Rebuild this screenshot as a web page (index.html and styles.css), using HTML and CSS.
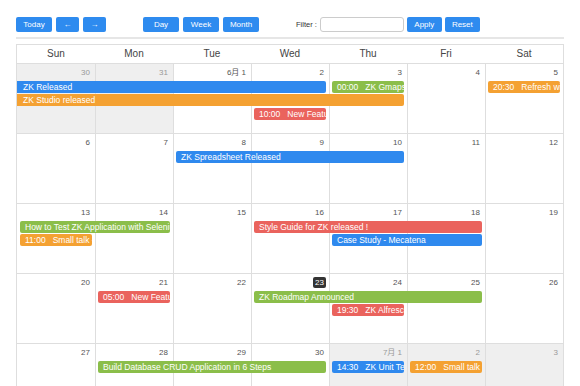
FILE: index.html
```html
<!DOCTYPE html>
<html lang="en">

<head>
    <meta charset="UTF-8">
    <title>Calendar</title>
    <link rel="stylesheet" href="styles.css">
</head>

<body>

    <div class="toolbar">
        <div class="group">
            <div class="btn">Today</div>
            <div class="btn arrow">&larr;</div>
            <div class="btn arrow">&rarr;</div>
        </div>
        <div class="group views">
            <div class="btn">Day</div>
            <div class="btn">Week</div>
            <div class="btn">Month</div>
        </div>
        <div class="group filter">
            <label>Filter :</label>
            <input type="text">
            <div class="btn small">Apply</div>
            <div class="btn small">Reset</div>
        </div>
    </div>

    <div class="cal">
        <div class="head">
            <div>Sun</div>
            <div>Mon</div>
            <div>Tue</div>
            <div>Wed</div>
            <div>Thu</div>
            <div>Fri</div>
            <div>Sat</div>
        </div>

        <div class="week">
            <div class="day other"><span class="num">30</span></div>
            <div class="day other"><span class="num">31</span></div>
            <div class="day"><span class="num">6月 1</span></div>
            <div class="day"><span class="num">2</span></div>
            <div class="day"><span class="num">3</span></div>
            <div class="day"><span class="num">4</span></div>
            <div class="day"><span class="num">5</span></div>

            <div class="ev blue cont c1 s4 r2">ZK Released</div>
            <div class="ev green c5 r2"><span class="time">00:00</span>ZK Gmaps Released</div>
            <div class="ev orange c7 r2"><span class="time">20:30</span>Refresh with ZK</div>
            <div class="ev orange cont c1 s5 r3">ZK Studio released</div>
            <div class="ev red c4 r4"><span class="time">10:00</span>New Features of ZK 6</div>
        </div>

        <div class="week">
            <div class="day"><span class="num">6</span></div>
            <div class="day"><span class="num">7</span></div>
            <div class="day"><span class="num">8</span></div>
            <div class="day"><span class="num">9</span></div>
            <div class="day"><span class="num">10</span></div>
            <div class="day"><span class="num">11</span></div>
            <div class="day"><span class="num">12</span></div>

            <div class="ev blue c3 s3 r2">ZK Spreadsheet Released</div>
        </div>

        <div class="week">
            <div class="day"><span class="num">13</span></div>
            <div class="day"><span class="num">14</span></div>
            <div class="day"><span class="num">15</span></div>
            <div class="day"><span class="num">16</span></div>
            <div class="day"><span class="num">17</span></div>
            <div class="day"><span class="num">18</span></div>
            <div class="day"><span class="num">19</span></div>

            <div class="ev green c1 s2 r2">How to Test ZK Application with Selenium</div>
            <div class="ev red c4 s3 r2">Style Guide for ZK released !</div>
            <div class="ev orange c1 r3"><span class="time">11:00</span>Small talk - ZK</div>
            <div class="ev blue c5 s2 r3">Case Study - Mecatena</div>
        </div>

        <div class="week">
            <div class="day"><span class="num">20</span></div>
            <div class="day"><span class="num">21</span></div>
            <div class="day"><span class="num">22</span></div>
            <div class="day"><span class="num today">23</span></div>
            <div class="day"><span class="num">24</span></div>
            <div class="day"><span class="num">25</span></div>
            <div class="day"><span class="num">26</span></div>

            <div class="ev red c2 r2"><span class="time">05:00</span>New Features of ZK 6</div>
            <div class="ev green c4 s3 r2">ZK Roadmap Announced</div>
            <div class="ev red c5 r3"><span class="time">19:30</span>ZK Alfresco</div>
        </div>

        <div class="week">
            <div class="day"><span class="num">27</span></div>
            <div class="day"><span class="num">28</span></div>
            <div class="day"><span class="num">29</span></div>
            <div class="day"><span class="num">30</span></div>
            <div class="day other"><span class="num">7月 1</span></div>
            <div class="day other"><span class="num">2</span></div>
            <div class="day other"><span class="num">3</span></div>

            <div class="ev green c2 s3 r2">Build Database CRUD Application in 6 Steps</div>
            <div class="ev blue c5 r2"><span class="time">14:30</span>ZK Unit Test</div>
            <div class="ev orange c6 r2"><span class="time">12:00</span>Small talk - ZK</div>
        </div>
    </div>

</body>

</html>
```

FILE: styles.css
```css
html {
    overflow: hidden;
}

body {
    margin: 0;
    padding: 0 16px;
    background: white;
    color: #333;
    font-family: "Liberation Sans", "Noto Sans CJK JP", Arial, sans-serif;
}

/* toolbar */
.toolbar {
    display: flex;
    align-items: center;
    padding: 17px 0 5px;
    border-bottom: 2px solid #e6e6e6;
}

.group {
    display: flex;
    align-items: center;
    gap: 4px;
}

.views {
    margin-left: 37px;
}

.filter {
    margin-left: 37px;
    gap: 3px;
}

.filter label {
    font-size: 7.5px;
    color: #333;
}

.filter input {
    box-sizing: border-box;
    width: 84px;
    height: 15px;
    margin: 0;
    border: 1px solid #ccc;
    border-radius: 3px;
    padding: 0 3px;
}

.btn {
    box-sizing: border-box;
    min-width: 36px;
    height: 15px;
    line-height: 15px;
    padding: 0 6px;
    background: #2e8bef;
    color: white;
    font-size: 8px;
    text-align: center;
    border-radius: 2px;
}

.btn.arrow {
    min-width: 23px;
    padding: 0;
}

.btn.small {
    min-width: 35px;
}

/* calendar */
.cal {
    margin-top: 5px;
    border: 1px solid #dedede;
    border-bottom: none;
}

.head {
    display: grid;
    grid-template-columns: repeat(7, 1fr);
    height: 18px;
    line-height: 18px;
    border-bottom: 1px solid #dedede;
    font-size: 10px;
    color: #444;
    text-align: center;
}

.week {
    display: grid;
    grid-template-columns: repeat(7, 1fr);
    grid-template-rows: 17px 13.4px 13.4px 13.4px 1fr;
    height: 69px;
    border-bottom: 1px solid #dedede;
}

.day {
    grid-row: 1 / -1;
    border-left: 1px solid #dedede;
    padding: 3px 4px 0 0;
    text-align: right;
    font-size: 8px;
    line-height: 11px;
}

.day:nth-child(1) { grid-column: 1; border-left: none; }
.day:nth-child(2) { grid-column: 2; }
.day:nth-child(3) { grid-column: 3; }
.day:nth-child(4) { grid-column: 4; }
.day:nth-child(5) { grid-column: 5; }
.day:nth-child(6) { grid-column: 6; }
.day:nth-child(7) { grid-column: 7; }

.day.other {
    background: #efefef;
}

.num {
    display: inline-block;
    vertical-align: top;
    padding: 0 1px;
    font-size: 8px;
    line-height: 11px;
    color: #555;
    border-radius: 2px;
}

.other .num {
    color: #999;
}

.num.today {
    background: #333;
    color: white;
    padding: 0 2px;
    margin-right: -1px;
}

/* events */
.ev {
    align-self: start;
    height: 12px;
    line-height: 12px;
    margin: 0 3.5px 0 3px;
    padding: 0 5px;
    border-radius: 2px;
    font-size: 8.5px;
    color: white;
    white-space: nowrap;
    overflow: hidden;
}

.ev.cont {
    margin-left: 0;
    padding-left: 6px;
    border-top-left-radius: 0;
    border-bottom-left-radius: 0;
}

.ev .time {
    margin-right: 7px;
}

.blue { background: #2f89ee; }
.green { background: #8bbe4a; }
.orange { background: #f4a132; }
.red { background: #ea635d; }

.c1 { grid-column-start: 1; }
.c2 { grid-column-start: 2; }
.c3 { grid-column-start: 3; }
.c4 { grid-column-start: 4; }
.c5 { grid-column-start: 5; }
.c6 { grid-column-start: 6; }
.c7 { grid-column-start: 7; }

.s2 { grid-column-end: span 2; }
.s3 { grid-column-end: span 3; }
.s4 { grid-column-end: span 4; }
.s5 { grid-column-end: span 5; }

.r2 { grid-row: 2; }
.r3 { grid-row: 3; }
.r4 { grid-row: 4; }
```
